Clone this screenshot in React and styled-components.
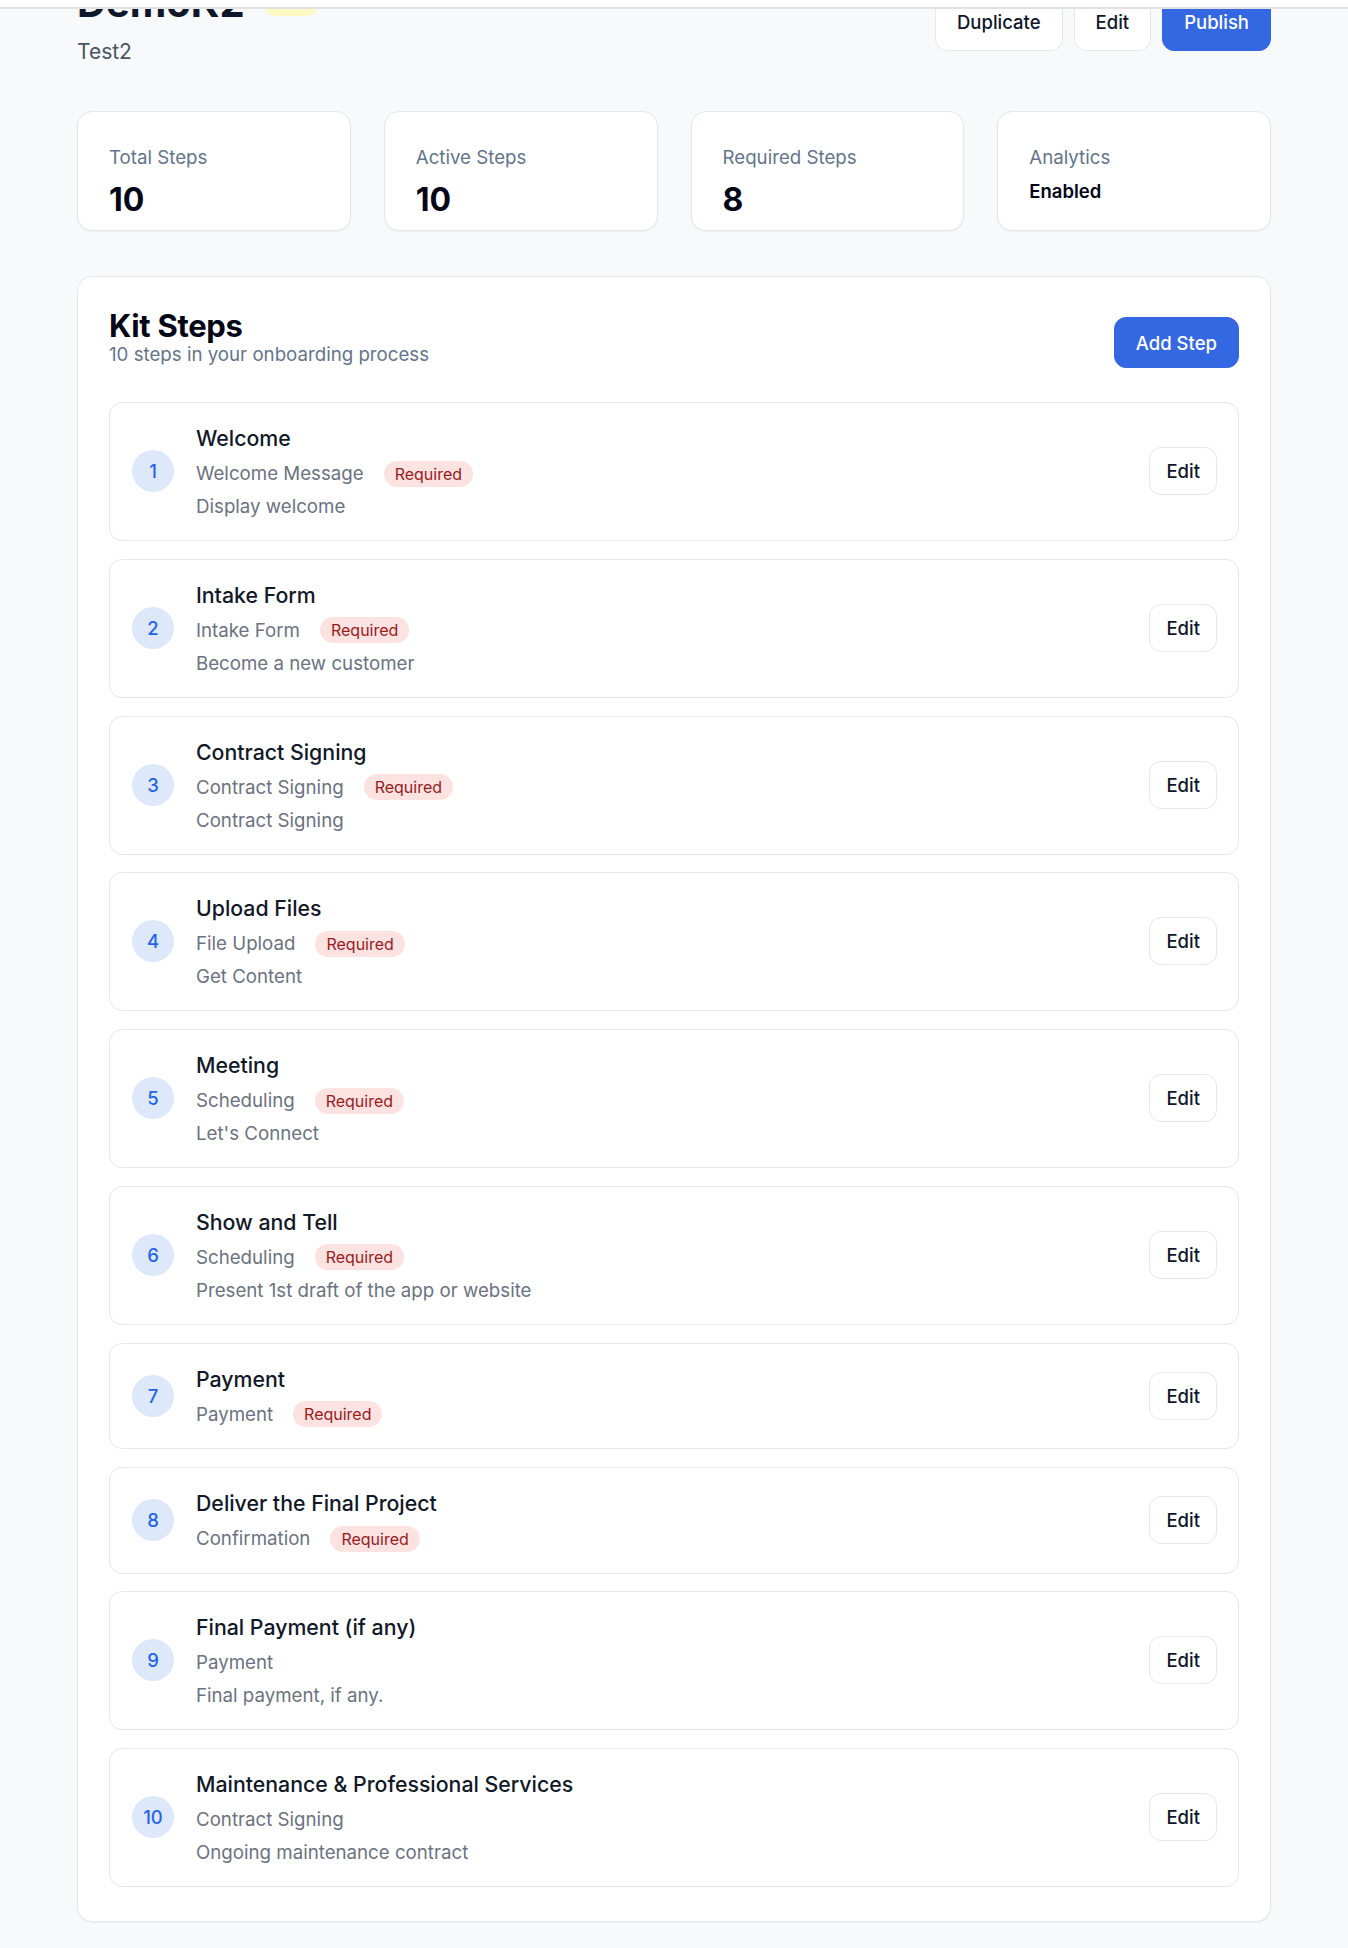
import styled, { createGlobalStyle } from "styled-components";

const steps = [
  { title: "Welcome", type: "Welcome Message", required: true, desc: "Display welcome" },
  { title: "Intake Form", type: "Intake Form", required: true, desc: "Become a new customer" },
  { title: "Contract Signing", type: "Contract Signing", required: true, desc: "Contract Signing" },
  { title: "Upload Files", type: "File Upload", required: true, desc: "Get Content" },
  { title: "Meeting", type: "Scheduling", required: true, desc: "Let's Connect" },
  { title: "Show and Tell", type: "Scheduling", required: true, desc: "Present 1st draft of the app or website" },
  { title: "Payment", type: "Payment", required: true },
  { title: "Deliver the Final Project", type: "Confirmation", required: true },
  { title: "Final Payment (if any)", type: "Payment", required: false, desc: "Final payment, if any." },
  { title: "Maintenance & Professional Services", type: "Contract Signing", required: false, desc: "Ongoing maintenance contract" },
];

const stats = [
  { label: "Total Steps", value: "10" },
  { label: "Active Steps", value: "10" },
  { label: "Required Steps", value: "8" },
  { label: "Analytics", value: "Enabled", small: true },
];

function App() {
  return (
    <>
      <GlobalStyle />
      <TopBar />
      <Page>
        <Header>
          <div>
            <TitleRow>
              <PageTitle>DemoK2</PageTitle>
              <StatusBadge>Draft</StatusBadge>
            </TitleRow>
            <PageSub>Test2</PageSub>
          </div>
          <Actions>
            <Button>Duplicate</Button>
            <Button>Edit</Button>
            <Button $primary>Publish</Button>
          </Actions>
        </Header>

        <Stats>
          {stats.map((s) => (
            <StatCard key={s.label}>
              <StatLabel>{s.label}</StatLabel>
              <StatValue $small={s.small}>{s.value}</StatValue>
            </StatCard>
          ))}
        </Stats>

        <Panel>
          <PanelHead>
            <div>
              <PanelTitle>Kit Steps</PanelTitle>
              <PanelSub>10 steps in your onboarding process</PanelSub>
            </div>
            <AddButton>Add Step</AddButton>
          </PanelHead>

          <StepList>
            {steps.map((step, i) => (
              <StepRow key={i}>
                <StepNum>{i + 1}</StepNum>
                <StepBody>
                  <StepTitle>{step.title}</StepTitle>
                  <StepMeta>
                    <span>{step.type}</span>
                    {step.required && <Required>Required</Required>}
                  </StepMeta>
                  {step.desc && <StepDesc>{step.desc}</StepDesc>}
                </StepBody>
                <EditButton>Edit</EditButton>
              </StepRow>
            ))}
          </StepList>
        </Panel>
      </Page>
    </>
  );
}

const GlobalStyle = createGlobalStyle`
body{
  margin:0;
  background:#f8f9fb;
  font-family:Inter,"Noto Sans",sans-serif;
  color:#0f172a;
  overflow:hidden;
}
*{box-sizing:border-box;}
`;

const TopBar = styled.div`
position:fixed;
top:0;
left:0;
right:0;
height:9px;
background:#fff;
border-bottom:2px solid #e2e2e4;
z-index:10;
`;

const Page = styled.div`
max-width:1194px;
margin:0 auto;
padding-bottom:28px;
`;

const Header = styled.div`
display:flex;
justify-content:space-between;
align-items:center;
margin-top:-20px;
`;

const TitleRow = styled.div`
display:flex;
align-items:center;
gap:18px;
`;

const PageTitle = styled.h1`
margin:0;
font-size:40px;
line-height:45px;
font-weight:700;
color:#0f172a;
`;

const StatusBadge = styled.span`
background:#fef9c3;
color:#854d0e;
font-size:13px;
font-weight:500;
height:26px;
line-height:26px;
padding:0 13px;
border-radius:999px;
`;

const PageSub = styled.div`
margin-top:12px;
font-size:21px;
line-height:30px;
color:#4b5563;
`;

const Actions = styled.div`
display:flex;
gap:11px;
`;

const Button = styled.button`
height:${(p) => (p.$compact ? "51px" : "54px")};
padding:0 21px ${(p) => (p.$compact ? "0" : "4px")};
font-family:inherit;
font-size:18.5px;
font-weight:500;
border-radius:12px;
border:1px solid ${(p) => (p.$primary ? "#3467e2" : "#e5e7eb")};
background:${(p) => (p.$primary ? "#3467e2" : "#fff")};
color:${(p) => (p.$primary ? "#fff" : "#0f172a")};
`;

const Stats = styled.div`
display:grid;
grid-template-columns:repeat(4,1fr);
gap:33px;
margin-top:44px;
`;

const StatCard = styled.div`
background:#fff;
border:1px solid #e5e7eb;
border-radius:15px;
box-shadow:0 1px 2px rgba(15,23,42,0.05);
padding:33px 31px 0;
height:120px;
`;

const StatLabel = styled.div`
font-size:18.7px;
line-height:26px;
color:#64748b;
`;

const StatValue = styled.div`
margin-top:${(p) => (p.$small ? "7px" : "10px")};
font-size:${(p) => (p.$small ? "18.5px" : "32px")};
line-height:${(p) => (p.$small ? "26px" : "38px")};
font-weight:${(p) => (p.$small ? 600 : 700)};
color:#020617;
`;

const Panel = styled.div`
margin-top:45px;
background:#fff;
border:1px solid #e5e7eb;
border-radius:15px;
box-shadow:0 1px 2px rgba(15,23,42,0.05);
padding:32px 31px 34px;
`;

const PanelHead = styled.div`
display:flex;
justify-content:space-between;
align-items:flex-start;
`;

const PanelTitle = styled.h2`
margin:0;
font-size:31px;
line-height:33px;
font-weight:700;
letter-spacing:-0.3px;
color:#020617;
`;

const PanelSub = styled.div`
font-size:18.7px;
line-height:25px;
color:#64748b;
`;

const AddButton = styled(Button).attrs({ $primary: true, $compact: true })`
margin-top:8px;
`;

const StepList = styled.div`
margin-top:34px;
display:flex;
flex-direction:column;
gap:17.8px;
`;

const StepRow = styled.div`
display:flex;
align-items:center;
gap:22px;
padding:20px 21px 21px 22px;
border:1px solid #e5e7eb;
border-radius:13px;
background:#fff;
`;

const StepNum = styled.div`
width:42px;
height:42px;
flex-shrink:0;
border-radius:50%;
background:#dde8fb;
color:#2563eb;
font-size:18.5px;
font-weight:500;
display:flex;
align-items:center;
justify-content:center;
`;

const StepBody = styled.div`
flex:1;
min-width:0;
`;

const StepTitle = styled.div`
font-size:21.3px;
line-height:30px;
font-weight:500;
color:#111827;
`;

const StepMeta = styled.div`
margin-top:7.5px;
min-height:26px;
display:flex;
align-items:center;
gap:20px;
font-size:18.7px;
color:#6b7280;
`;

const Required = styled.span`
background:#fde2e2;
color:#991b1b;
font-size:16px;
line-height:26px;
height:26px;
padding:0 11px;
border-radius:999px;
`;

const StepDesc = styled.div`
margin-top:7.5px;
font-size:18.7px;
line-height:25px;
color:#6b7280;
`;

const EditButton = styled.button`
height:48px;
padding:0 16px;
font-family:inherit;
font-size:18.5px;
font-weight:500;
color:#0f172a;
background:#fff;
border:1px solid #e5e7eb;
border-radius:12px;
flex-shrink:0;
`;

export default App;
